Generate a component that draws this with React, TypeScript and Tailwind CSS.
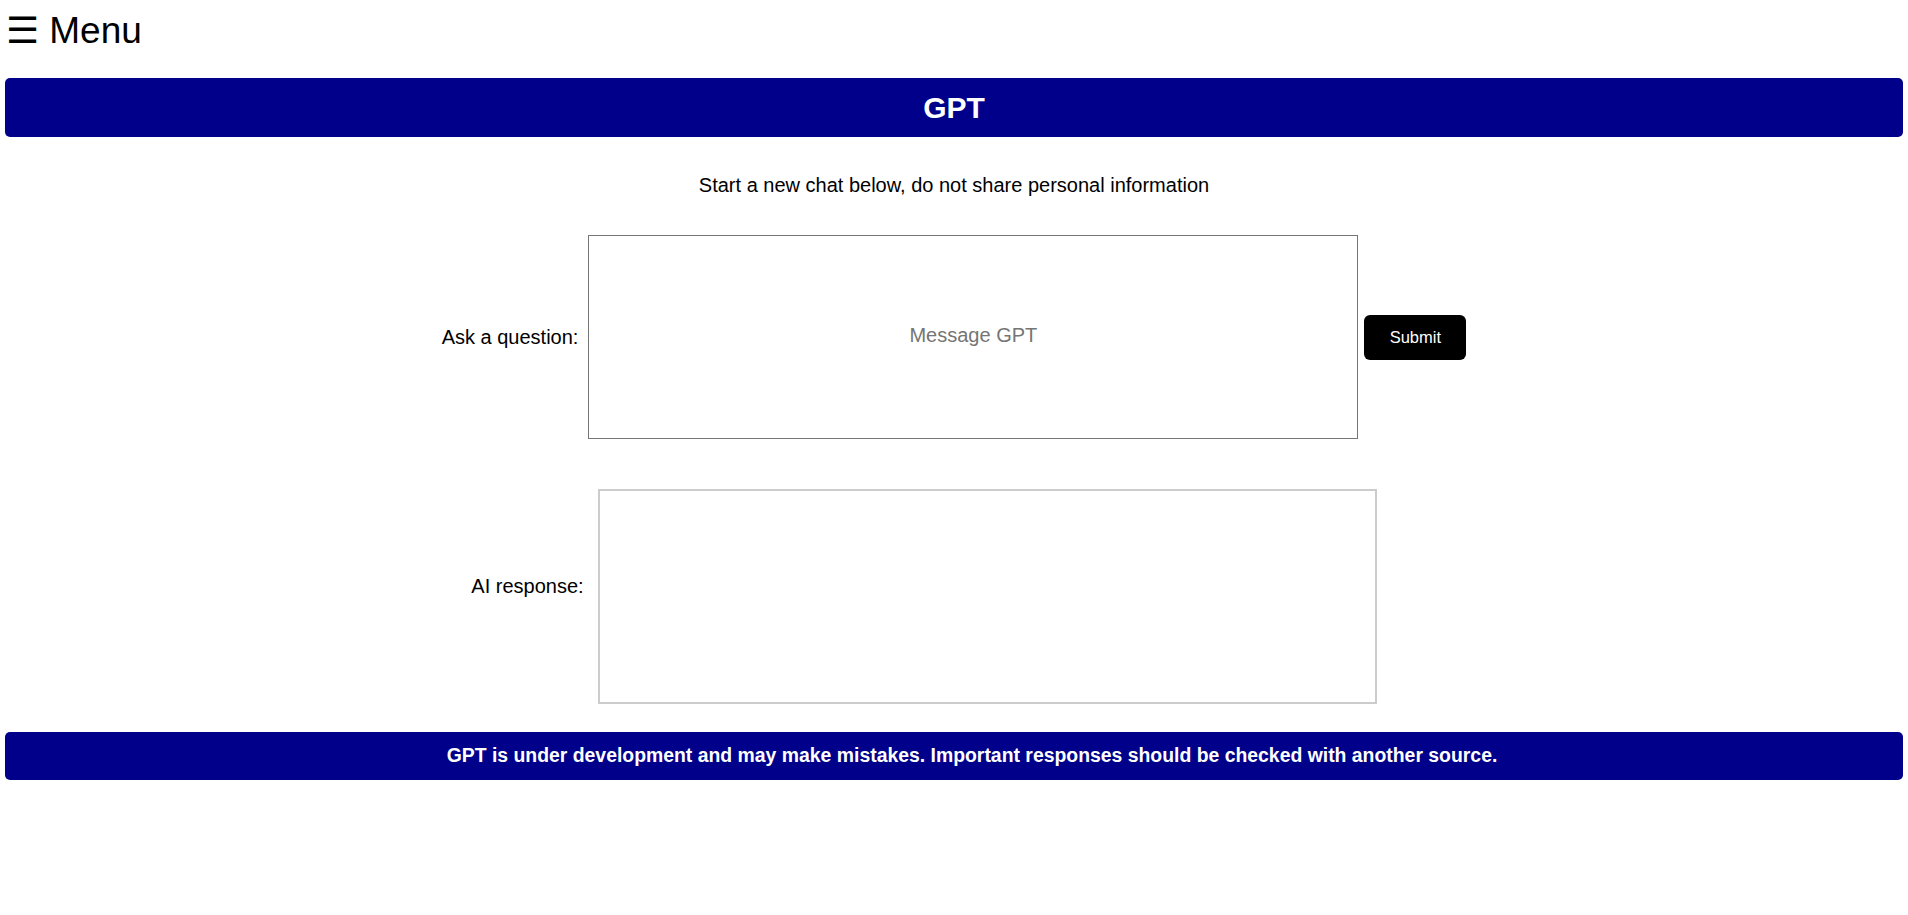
const pageFont = { fontFamily: '"Liberation Sans", Arial, sans-serif' };

export default function App() {
  return (
    <div className="min-h-screen bg-white text-black" style={pageFont}>
      <div className="px-[6px] pt-[10px] text-[37px] leading-[41px]">☰ Menu</div>

      <header className="mx-[5px] mt-[27px] flex h-[59px] items-center justify-center rounded-[5px] bg-[#00008b]">
        <h1 className="text-[30px] font-bold text-white">GPT</h1>
      </header>

      <p className="mt-[37px] text-center text-[20px] leading-[23px]">
        Start a new chat below, do not share personal information
      </p>

      <div className="mt-[38px] flex items-center justify-center">
        <label className="mr-[10px] text-[20px]">Ask a question:</label>
        <textarea
          className="h-[204px] w-[770px] resize-none border border-[#767676] px-2 pt-[84px] text-center text-[20px] placeholder:text-[#757575] focus:outline-none"
          placeholder="Message GPT"
        />
        <button
          type="button"
          className="ml-[6px] h-[45px] w-[102px] rounded-[6px] bg-black text-[16.5px] text-white"
        >
          Submit
        </button>
      </div>

      <div className="mt-[50px] flex items-center justify-center pr-[60px]">
        <span className="mb-[22px] mr-[14px] text-[20px]">AI response:</span>
        <div className="h-[215px] w-[779px] border-2 border-[#cccccc]" />
      </div>

      <footer className="mx-[5px] mt-[28px] flex h-[48px] items-center justify-center rounded-[5px] bg-[#00008b] pl-[36px]">
        <p className="text-[19.4px] font-bold text-white">
          GPT is under development and may make mistakes. Important responses should be checked with another source.
        </p>
      </footer>
    </div>
  );
}
